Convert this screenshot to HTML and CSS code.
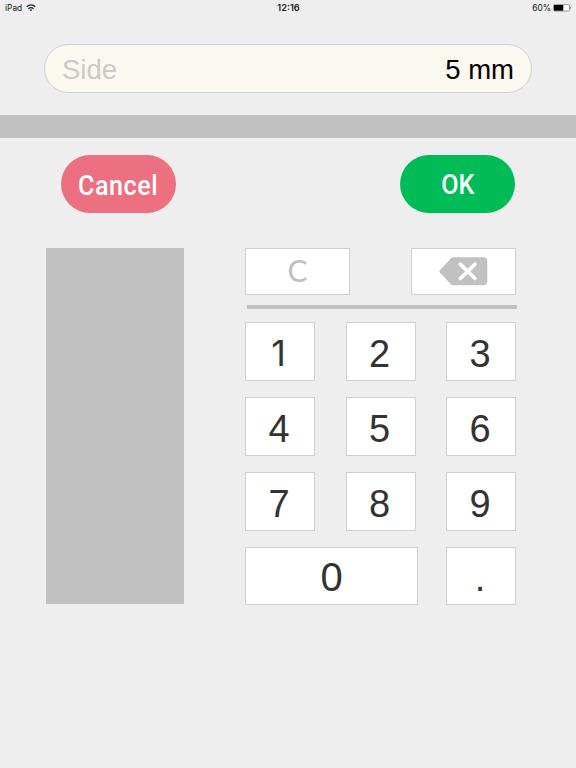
FILE: index.html
```html
<!DOCTYPE html>
<html lang="en">
<head>
<meta charset="utf-8">
<title>Side</title>
<link rel="stylesheet" href="styles.css">
</head>
<body>
<header class="status">
  <div class="device"><span>iPad</span>
    <svg class="wifi" width="10" height="8" viewBox="0 0 10 8"><g fill="none" stroke="#222" stroke-width="1.25"><path d="M.7 2.8Q5-1 9.3 2.8"/><path d="M2.4 4.7Q5 2.5 7.6 4.7"/></g><path d="M3.6 5.8Q5 4.7 6.4 5.8L5 7.3z" fill="#222"/></svg>
  </div>
  <span class="time">12:16</span>
  <div class="power"><span>60%</span>
    <svg width="19" height="8" viewBox="0 0 19 8"><rect x=".5" y=".6" width="16" height="6.5" rx="1" fill="#fff" stroke="#777" stroke-width=".7"/><rect x="1" y="1" width="9.3" height="5.7" fill="#000"/><path d="M17.3 2.5q1.5 1.3 0 2.7z" fill="#333"/></svg>
  </div>
</header>
<label class="field"><span class="field-name">Side</span><span class="field-value">5 mm</span></label>
<div class="band"></div>
<div class="actions">
  <button class="pill cancel"><span>Cancel</span></button>
  <button class="pill ok"><span>OK</span></button>
</div>
<main class="entry">
  <div class="panel"></div>
  <section class="pad">
    <div class="tools">
      <button class="key clear">C</button>
      <button class="key erase" aria-label="Delete">
        <svg width="49" height="29" viewBox="0 0 49 29"><path d="M.8 13.2L11.6 1.7Q13 .3 15 .3H44.5Q48.3 .3 48.3 4V24.6Q48.3 28.3 44.5 28.3H15Q13 28.3 11.6 26.9L.8 15.4Q-.1 14.3 .8 13.2z" fill="#c1c1c1"/><path d="M21.3 7.1L36 21.5M36 7.1L21.3 21.5" stroke="#fff" stroke-width="3.6" stroke-linecap="round"/></svg>
      </button>
    </div>
    <div class="rule"></div>
    <div class="keys">
      <button class="key one">1</button><button class="key">2</button><button class="key">3</button>
      <button class="key">4</button><button class="key">5</button><button class="key">6</button>
      <button class="key">7</button><button class="key">8</button><button class="key">9</button>
    </div>
    <div class="last">
      <button class="key zero">0</button><button class="key">.</button>
    </div>
  </section>
</main>
</body>
</html>
```
FILE: styles.css
```css
* { box-sizing: border-box; }
body {
  margin: 0;
  height: 768px;
  overflow: hidden;
  background: #eee;
  font-family: "Liberation Sans", Arial, sans-serif;
}
button { margin: 0; padding: 0; border: 0; font: inherit; }
svg { display: block; flex: none; }
.status {
  display: grid;
  grid-template-columns: 1fr auto 1fr;
  align-items: center;
  height: 16px;
  padding: 0 4px 0 5px;
  font: 8.4px/16px Inter, sans-serif;
  color: #222;
}
.device, .power { display: flex; align-items: center; }
.device { gap: 4px; }
.power { justify-content: flex-end; gap: 2px; }
.time { font-weight: 600; font-size: 9.2px; }
.field {
  display: flex;
  justify-content: space-between;
  align-items: center;
  width: 488px;
  height: 49px;
  margin: 28px 0 0 44px;
  padding: 3px 17px 0 17px;
  border: 1.5px solid #d0d0d0;
  border-radius: 25px;
  background: #fbf8ef;
  font-size: 27.5px;
}
.field-name { color: #cacaca; }
.field-value { color: #000; }
.band { height: 23px; margin-top: 22px; background: #c1c1c1; }
.actions {
  display: flex;
  justify-content: space-between;
  padding: 17px 61px 0;
}
.pill {
  width: 115px;
  height: 58px;
  border-radius: 29px;
  color: #fff;
  font: 500 27px/58px Roboto, sans-serif;
}
.pill span { display: inline-block; transform: scaleX(.93); }
.cancel { background: #ed7080; padding-top: 4px; letter-spacing: .6px; line-height: 54px; }
.ok { background: #00bc56; padding-top: 2px; line-height: 56px; }
.entry { display: flex; justify-content: space-between; padding: 35px 60px 0 46px; }
.panel { width: 138px; height: 356px; background: #c1c1c1; }
.pad { width: 271px; }
.key {
  display: flex;
  justify-content: center;
  align-items: center;
  height: 59px;
  border: 1px solid #d0d0d0;
  background: #fff;
  color: #333;
  font-size: 38px;
  padding: 5px 2px 0 0;
}
.one { font-family: Inter, sans-serif; font-size: 36px; padding: 3px 3px 0 0; }
.tools { display: flex; justify-content: space-between; }
.tools .key { width: 105px; height: 47px; }
.tools .clear { font-family: Lato, sans-serif; font-size: 30px; color: #c1c1c1; padding: 0 0 4px; }
.tools .erase { padding: 0; }
.rule { height: 4px; margin: 10px -1px 13px 2px; background: #c1c1c1; }
.keys {
  display: grid;
  grid-template-columns: repeat(3, 70px);
  justify-content: space-between;
  row-gap: 16px;
}
.last {
  display: grid;
  grid-template-columns: 173px 70px;
  justify-content: space-between;
  margin-top: 16px;
}
.last .key { height: 58px; }
.last .zero { font-size: 40px; padding: 2px 0 0; }
```
